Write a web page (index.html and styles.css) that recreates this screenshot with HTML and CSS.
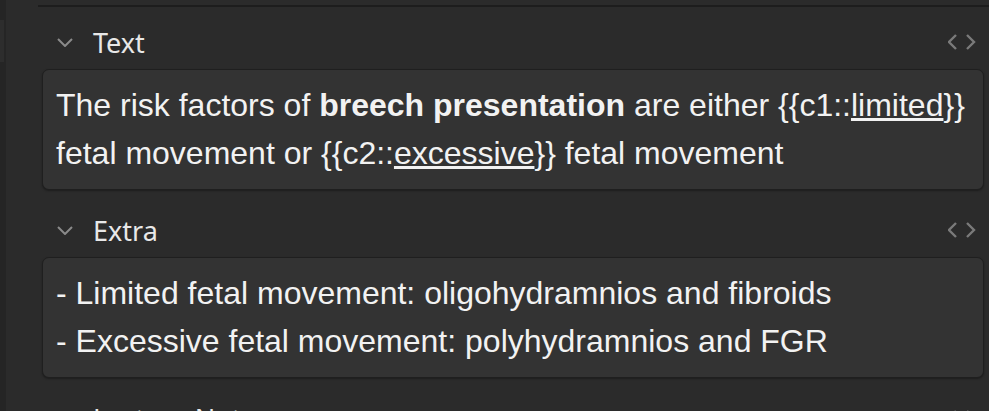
FILE: index.html
```html
<!DOCTYPE html>
<html lang="en">
<head>
    <meta charset="UTF-8">
    <title>Editor fields</title>
    <link rel="stylesheet" href="styles.css">
</head>
<body>
    <div class="side"><div class="side-tab"></div></div>
    <div class="editor">
        <div class="topbar"></div>
        <div class="fields">
            <div class="field">
                <div class="field-head">
                    <svg class="chevron" width="16" height="9" viewBox="0 0 16 9"><polyline points="1,1 8,8 15,1"/></svg>
                    <span class="label">Text</span>
                    <svg class="code" width="28" height="16" viewBox="0 0 28 16"><polyline points="8,1 1,8 8,15"/><polyline points="19,1 26,8 19,15"/></svg>
                </div>
                <div class="card">The risk factors of <b>breech presentation</b> are either {{c1::<u>limited</u>}}<br>fetal movement or {{c2::<u>excessive</u>}} fetal movement</div>
            </div>
            <div class="field">
                <div class="field-head">
                    <svg class="chevron" width="16" height="9" viewBox="0 0 16 9"><polyline points="1,1 8,8 15,1"/></svg>
                    <span class="label">Extra</span>
                    <svg class="code" width="28" height="16" viewBox="0 0 28 16"><polyline points="8,1 1,8 8,15"/><polyline points="19,1 26,8 19,15"/></svg>
                </div>
                <div class="card">- Limited fetal movement: oligohydramnios and fibroids<br>- Excessive fetal movement: polyhydramnios and FGR</div>
            </div>
            <div class="field">
                <div class="field-head">
                    <svg class="chevron" width="16" height="9" viewBox="0 0 16 9"><polyline points="1,1 8,8 15,1"/></svg>
                    <span class="label">Lecture Notes</span>
                    <svg class="code" width="28" height="16" viewBox="0 0 28 16"><polyline points="8,1 1,8 8,15"/><polyline points="19,1 26,8 19,15"/></svg>
                </div>
            </div>
        </div>
    </div>
</body>
</html>
```

FILE: styles.css
```css
body {
    margin: 0;
    background-color: #2b2b2b;
    display: flex;
    height: 411px;
    overflow: hidden;
    font-family: "Liberation Sans", Arial, sans-serif;
}
.side {
    width: 6px;
    background-color: #252525;
    flex-shrink: 0;
}
.side-tab {
    margin-top: 20px;
    height: 42px;
    width: 4px;
    background-color: #2d2d2d;
}
.editor {
    flex: 1;
}
.topbar {
    margin-left: 32px;
    height: 5px;
    border-bottom: 2px solid #1d1d1d;
}
.fields {
    padding: 0 5px 0 36px;
}
.field-head {
    display: flex;
    align-items: center;
    height: 44px;
    margin-top: 13px;
    margin-bottom: 5px;
    padding-left: 15px;
}
.field + .field .field-head {
    margin-top: 18px;
}
.chevron {
    fill: none;
    stroke: #8a8a8a;
    stroke-width: 2;
}
.label {
    font-family: "Noto Sans", sans-serif;
    font-size: 27px;
    color: #e8e8e8;
    margin-left: 20px;
    flex: 1;
}
.code {
    fill: none;
    stroke: #7a7a7a;
    stroke-width: 2.4;
    margin-right: 8px;
}
.card {
    background-color: #333333;
    border: 1px solid #1f1f1f;
    border-radius: 7px;
    box-shadow: 0 1px 2px rgba(0, 0, 0, 0.35);
    padding: 11px 13px 12px;
    font-size: 32px;
    line-height: 48px;
    color: #f2f2f2;
}
```
